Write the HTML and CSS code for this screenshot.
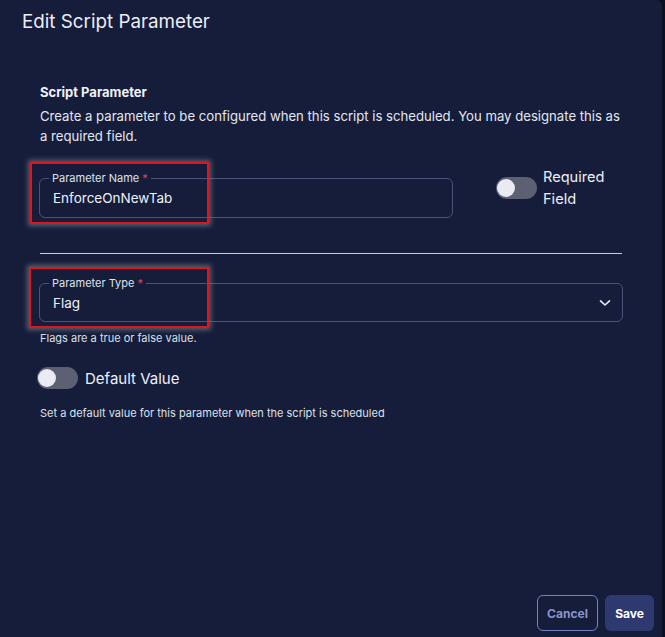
FILE: index.html
```html
<!DOCTYPE html>
<html>
<head>
<meta charset="utf-8">
<link rel="stylesheet" href="styles.css">
</head>
<body>
<div class="page">
  <div class="dialog">
    <h1 class="title">Edit Script Parameter</h1>
    <div class="content">
      <div class="section-title">Script Parameter</div>
      <p class="desc">Create a parameter to be configured when this script is scheduled. You may designate this as a required field.</p>

      <div class="name-row">
        <div class="field name-field">
          <span class="field-label">Parameter Name <span class="req">*</span></span>
          <span class="field-value">EnforceOnNewTab</span>
          <div class="annot annot-name"></div>
        </div>
        <div class="req-toggle">
          <span class="toggle"><span class="knob"></span></span>
          <span class="toggle-text">Required<br>Field</span>
        </div>
      </div>

      <div class="divider"></div>

      <div class="field type-field">
        <span class="field-label">Parameter Type <span class="req">*</span></span>
        <span class="field-value">Flag</span>
        <svg class="chevron" width="12" height="8" viewBox="0 0 12 8"><path d="M1.5 1.8 L6 6 L10.5 1.8" fill="none" stroke="#e8eaf2" stroke-width="1.6" stroke-linecap="round" stroke-linejoin="round"/></svg>
        <div class="annot annot-type"></div>
      </div>
      <div class="helper">Flags are a true or false value.</div>

      <div class="default-row">
        <span class="toggle"><span class="knob"></span></span>
        <span class="default-text">Default Value</span>
      </div>
      <div class="helper helper2">Set a default value for this parameter when the script is scheduled</div>
    </div>
    <div class="footer">
      <button class="btn btn-cancel">Cancel</button>
      <button class="btn btn-save">Save</button>
    </div>
  </div>
  <div class="edge"></div>
</div>
</body>
</html>
```
FILE: styles.css
```css
* { box-sizing: border-box; }
html, body { margin: 0; padding: 0; }
body {
  width: 665px;
  height: 637px;
  overflow: hidden;
  background: #0b1020;
  font-family: Inter, "Noto Sans", "Liberation Sans", sans-serif;
  color: #e8eaf2;
}
.page { display: flex; width: 665px; height: 637px; }
.dialog {
  width: 662px;
  height: 637px;
  background: #151d3b;
  border-top-right-radius: 6px;
  display: flex;
  flex-direction: column;
}
.edge { flex: 1; background: #0b1020; }
.title {
  margin: 0;
  padding: 10px 0 0 22px;
  font-size: 18.8px;
  line-height: 24px;
  font-weight: 400;
  color: #eceef5;
}
.content { padding: 50px 40px 0 39px; }
.section-title {
  font-size: 13px;
  font-weight: 700;
  line-height: 16px;
  padding-left: 1px;
  color: #f0f1f6;
}
.desc {
  margin: 6px 0 0 0;
  padding-left: 1px;
  font-size: 13.15px;
  line-height: 20px;
  color: #e4e6ee;
}
.name-row {
  display: flex;
  align-items: flex-start;
  margin-top: 32px;
}
.field {
  position: relative;
  border: 1px solid #4b5378;
  border-radius: 6px;
  display: flex;
  align-items: center;
  padding-left: 13px;
}
.name-field { width: 414px; height: 40px; }
.type-field { width: 584px; height: 39px; }
.field-label {
  position: absolute;
  top: -8px;
  left: 9px;
  padding: 0 3px;
  background: #151d3b;
  font-size: 11px;
  line-height: 14px;
  color: #dfe2ec;
}
.req { color: #d9485a; }
.field-value { font-size: 13.5px; color: #f0f1f6; }
.chevron { position: absolute; right: 11px; top: 15px; }
.annot {
  position: absolute;
  border: 2px solid #e0141e;
  box-shadow: 0 0 5px 2px rgba(150,150,150,0.55);
  pointer-events: none;
}
.annot-name { left: -10px; top: -17px; width: 179px; height: 62px; }
.annot-type { left: -11px; top: -17px; width: 180px; height: 61px; }
.req-toggle {
  display: flex;
  align-items: center;
  margin-left: 43px;
  margin-top: -12px;
}
.toggle {
  position: relative;
  display: inline-block;
  width: 41px;
  height: 22px;
  border-radius: 11px;
  background: #5c6072;
}
.knob {
  position: absolute;
  left: 1px;
  top: 2px;
  width: 18px;
  height: 18px;
  border-radius: 50%;
  background: #e9eaf2;
}
.toggle-text {
  margin-left: 6px;
  font-size: 14.6px;
  line-height: 22px;
  color: #eef0f6;
}
.divider {
  height: 1px;
  background: #c9cdd9;
  margin: 35px 0 0 1px;
}
.divider + .field { margin-top: 29px; }
.helper {
  margin-top: 9px;
  padding-left: 1px;
  font-size: 11px;
  line-height: 14px;
  color: #dde0ea;
}
.default-row {
  display: flex;
  align-items: center;
  margin-top: 22px;
  margin-left: -2px;
}
.default-text {
  margin-left: 7px;
  font-size: 15px;
  color: #eef0f6;
}
.helper2 { margin-top: 17px; }
.footer {
  margin-top: auto;
  display: flex;
  justify-content: flex-end;
  gap: 7px;
  padding: 0 8px 6px 0;
}
.btn {
  height: 36px;
  border-radius: 6px;
  font-family: Inter, "Noto Sans", "Liberation Sans", sans-serif;
  font-size: 12px;
  font-weight: 700;
  cursor: pointer;
}
.btn-cancel {
  width: 61px;
  background: transparent;
  border: 1px solid #7881c0;
  color: #8b94cc;
}
.btn-save {
  width: 49px;
  background: #2e396f;
  border: none;
  color: #ffffff;
}
```
